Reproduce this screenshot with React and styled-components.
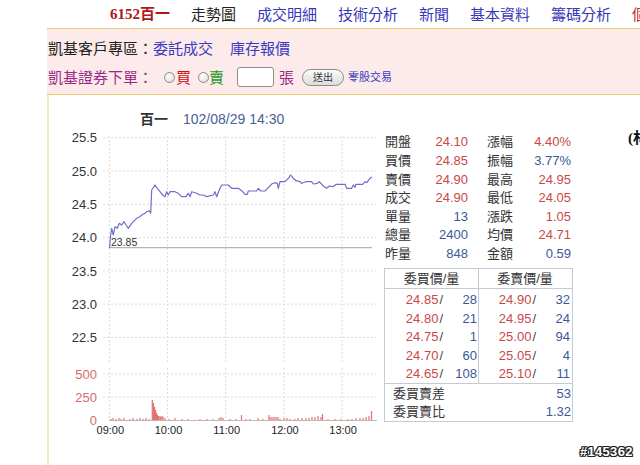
import React from 'react';
import styled, { createGlobalStyle } from 'styled-components';

const GlobalStyle = createGlobalStyle`
  html, body { margin: 0; padding: 0; background: #fff; }
  body {
    width: 640px; height: 465px; overflow: hidden;
    font-family: "Liberation Sans", "Noto Sans CJK TC", sans-serif;
    color: #333;
  }
`;

const RED = '#c94848';
const BLUE = '#3d5896';

const Page = styled.div`
  width: 640px; height: 465px; position: relative; overflow: hidden;
  display: flex; flex-direction: column;
`;

const Nav = styled.nav`
  height: 28px; flex: none; display: flex; align-items: center; gap: 21px;
  padding-left: 110px; white-space: nowrap; font-size: 15px; line-height: 1; overflow: hidden;
`;
const Brand = styled.span`
  flex: none; color: #b01818; font-weight: bold;
  font-family: "Liberation Serif", "Noto Sans CJK TC", serif;
`;
const NavItem = styled.span`
  flex: none;
  color: ${p => (p.$tone === 'black' ? '#222' : p.$tone === 'red' ? '#c0302a' : '#3737b8')};
`;

const ClientBox = styled.div`
  flex: none; margin-left: 47px; background: #fdeaea;
  border-top: 1px solid #e8cc72; border-bottom: 1px solid #e8cc72;
  padding: 9px 0 7px 1px; display: flex; flex-direction: column; gap: 9px;
`;
const BoxRow = styled.div`
  height: 20px; display: flex; align-items: center; font-size: 15px; white-space: nowrap; line-height: 1;
`;
const BoxLabel = styled.span`
  flex: none; color: ${p => (p.$order ? '#9a2a88' : '#222')};
`;
const BoxLink = styled.span`
  flex: none; color: #3a3ac0; margin-right: ${p => p.$mr || 0}px;
`;
const Radio = styled.span`
  flex: none; box-sizing: border-box; width: 11px; height: 11px; border-radius: 50%;
  border: 1px solid #8c8c8c; background: radial-gradient(circle at 40% 35%, #fff, #d8d8d8);
  margin-left: ${p => p.$ml}px; margin-right: ${p => p.$mr}px;
`;
const SideText = styled.span`
  flex: none; color: ${p => (p.$buy ? '#d01010' : '#1c9a1c')};
`;
const QtyInput = styled.input`
  flex: none; box-sizing: border-box; width: 37px; height: 20px; margin: 0 0 0 13px;
  border: 1px solid #8e8e8e; border-radius: 3px; padding: 0; background: #fff;
`;
const Unit = styled.span`
  flex: none; color: #9a2a88; margin-left: 5px;
`;
const SendButton = styled.button`
  flex: none; box-sizing: border-box; width: 42px; height: 17px; margin-left: 8px;
  border-radius: 9px; border: 1px solid #8a8a8a; background: linear-gradient(#fbfbfb, #dcdcdc);
  font-size: 10px; line-height: 15px; color: #333; padding: 0;
  font-family: "Liberation Sans", "Noto Sans CJK TC", sans-serif;
`;
const OddLot = styled.span`
  flex: none; margin-left: 4px; font-size: 11px; color: #3a3ac0;
`;

const Panel = styled.div`
  flex: 1; min-height: 0; margin-left: 47px; border-left: 2px solid #f4ebb3;
  display: flex; white-space: nowrap;
`;
const ChartSvg = styled.svg`
  flex: none; display: block;
`;
const Side = styled.div`
  flex: none; width: 190px; padding-top: 37.7px;
`;
const StatGrid = styled.div`
  display: grid; grid-template-columns: 36px 47px 55px 48px; grid-auto-rows: 18.6px;
  align-items: center; font-size: 13px; padding-left: 2px; line-height: 1;
`;
const StatLabel = styled.span`
  color: #333; padding-left: ${p => (p.$second ? 19 : 0)}px;
`;
const StatValue = styled.span`
  text-align: right; color: ${p => (p.$blue ? BLUE : RED)};
`;

const Book = styled.div`
  box-sizing: border-box; width: 189px; margin: 5.3px 0 0 1px;
  border: 1px solid #c6cad3; font-size: 13px; line-height: 1;
`;
const BookHead = styled.div`
  display: grid; grid-template-columns: 94px 92px; height: 19px; border-bottom: 1px solid #c6cad3;
`;
const HeadCell = styled.div`
  display: flex; align-items: center; justify-content: center; color: #333;
  border-right: ${p => (p.$divider ? '1px solid #c6cad3' : 'none')};
`;
const BookBody = styled.div`
  display: grid; grid-template-columns: 94px 92px; border-bottom: 1px solid #c6cad3;
`;
const BookCol = styled.div`
  padding: 1px 0 0; border-right: ${p => (p.$divider ? '1px solid #c6cad3' : 'none')};
`;
const BookRow = styled.div`
  display: grid; height: 18.6px; align-items: center;
  grid-template-columns: ${p => (p.$ask ? '57px 34px' : '58px 34px')};
  padding-right: ${p => (p.$ask ? 1 : 2)}px;
`;
const Price = styled.span`
  text-align: right; color: ${RED};
`;
const Slash = styled.span`
  color: #444; margin-left: 1px;
`;
const Vol = styled.span`
  text-align: right; color: ${BLUE};
`;
const FootRow = styled.div`
  height: 18.3px; display: flex; align-items: center; justify-content: space-between;
  padding: 0 1px 0 8px;
`;
const FootLabel = styled.span`
  color: #333;
`;
const FootValue = styled.span`
  color: ${BLUE};
`;

const SideNote = styled.div`
  flex: none; margin-left: 55px; padding-top: 35.5px; font-size: 15px; line-height: 1;
  font-weight: bold; color: #111; font-family: "Liberation Serif", "Noto Sans CJK TC", serif;
`;

const Watermark = styled.div`
  position: absolute; left: 580px; top: 444px; font-size: 13px; font-weight: bold; color: #fff;
  letter-spacing: 0.3px;
  text-shadow: -1px 0 #222, 1px 0 #222, 0 -1px #222, 0 1px #222, -1px -1px #222, 1px 1px #222, -1px 1px #222, 1px -1px #222;
`;

const priceY = v => 171 + (25 - v) * 66.6;
const priceTicks = [25.5, 25.0, 24.5, 24.0, 23.5, 23.0, 22.5];
const volTicks = [[500, 374], [250, 397], [0, 420]];
const hourX = i => 109.3 + i * 58.2;
const hours = ['09:00', '10:00', '11:00', '12:00', '13:00'];

const linePts = [
  [109.5, 248], [110.5, 236], [111.7, 228.3], [113.3, 235], [115, 226.7], [117.3, 228.3], [119.3, 223.3],
  [121.7, 225], [124, 221.7], [126, 225], [128.3, 228.3], [131.7, 223.3], [133.3, 221.7], [136.7, 218.3],
  [140, 216.7], [141.7, 215], [145, 213.3], [146.7, 211.7], [149.3, 210.7], [150.7, 213.3], [151.7, 190],
  [155, 185], [157.3, 188.3], [160, 191.7], [162.7, 195], [165, 196.7], [166.7, 191.7], [168.3, 195],
  [170, 191.7], [175, 191.7], [178.3, 193.3], [181.7, 196.7], [186, 196.7], [188.3, 193.3], [190, 196.7],
  [191.7, 191.7], [196.7, 193.3], [200, 195], [203.3, 195], [206.7, 196.7], [213.3, 195], [215, 191.7],
  [216.7, 196.7], [220, 188.3], [221.7, 185], [228.3, 185], [231.7, 188.3], [238.3, 188.3], [241.7, 190.7],
  [245, 194.3], [247.3, 194.3], [248.3, 191], [256.7, 191], [258.3, 188.3], [260.7, 191], [265, 191],
  [268.3, 187.7], [271.7, 184], [275, 182.7], [277.3, 183.3], [278.3, 188.3], [280, 181.7], [285, 181.7],
  [288.3, 178.3], [290.7, 175], [293.3, 178.3], [296, 180.7], [300, 181.7], [301.7, 183.3], [306, 181.7],
  [311.7, 181.7], [313.3, 184], [317.3, 183.3], [319.3, 181.7], [323.3, 186], [326.7, 188.3], [329.3, 186],
  [333.3, 186.7], [336, 184.3], [345, 184.3], [346.7, 188.3], [351.7, 188.3], [353.3, 185], [355, 187.3],
  [356, 184.3], [362.7, 184.3], [365, 181.7], [366.7, 182.7], [370, 178.3], [372, 177],
];
const linePath = linePts.map((p, i) => `${i ? 'L' : 'M'}${p[0]},${p[1]}`).join(' ');

const volBars = [
  [111, 1], [113, 2], [116, 1], [119, 2], [121, 1], [124, 2], [130, 1], [133, 2], [137, 1], [140, 2],
  [143, 1], [146, 2], [149, 1], [152.3, 20], [153.5, 17], [154.6, 13], [155.6, 10], [156.6, 7], [157.6, 5],
  [158.6, 4], [160, 4], [161, 3], [162, 4], [163, 3], [165, 2], [169, 1], [175, 2], [182, 1], [188, 1],
  [200, 1], [207, 1], [213, 1], [219, 2], [221, 3], [223, 2], [230, 1], [236, 1], [241.5, 5], [246, 1],
  [250, 1], [258, 2], [263, 1], [269, 5], [270, 3], [272, 3], [274, 3], [276, 3], [278, 3], [280, 1],
  [284, 2], [287, 2], [290, 1], [295, 1], [298, 2], [302, 2], [306, 2], [309, 2], [312, 3], [315, 3],
  [318, 4], [321, 3], [322.5, 6], [328, 1], [335, 1], [341, 1], [348, 1], [352, 1], [356, 2], [360, 2],
  [363, 2], [366, 3], [369, 4], [371.5, 9],
];

const stats = [
  ['開盤', '24.10', false, '漲幅', '4.40%', false],
  ['買價', '24.85', false, '振幅', '3.77%', true],
  ['賣價', '24.90', false, '最高', '24.95', false],
  ['成交', '24.90', false, '最低', '24.05', false],
  ['單量', '13', true, '漲跌', '1.05', false],
  ['總量', '2400', true, '均價', '24.71', false],
  ['昨量', '848', true, '金額', '0.59', true],
];
const bids = [['24.85', '28'], ['24.80', '21'], ['24.75', '1'], ['24.70', '60'], ['24.65', '108']];
const asks = [['24.90', '32'], ['24.95', '24'], ['25.00', '94'], ['25.05', '4'], ['25.10', '11']];

function Chart() {
  const font = '"Liberation Sans", "Noto Sans CJK TC", sans-serif';
  return (
    <ChartSvg width={334} height={370} viewBox="49 95 334 370">
      <g fontFamily={font}>
        <text x={140} y={124} fontSize={14} fill="#333" fontWeight="bold">百一</text>
        <text x={183} y={124} fontSize={14} fill="#4a6098">102/08/29 14:30</text>
        {priceTicks.map(v => (
          <g key={v}>
            <line x1={103} x2={376} y1={priceY(v)} y2={priceY(v)} stroke="#dcdcdc" strokeDasharray="2,2" />
            <text x={97} y={priceY(v) + 4.6} fontSize={13} fill="#333" textAnchor="end">{v.toFixed(1)}</text>
          </g>
        ))}
        {volTicks.map(([v, y]) => (
          <g key={v}>
            {v > 0 && <line x1={103} x2={376} y1={y} y2={y} stroke="#dcdcdc" strokeDasharray="2,2" />}
            <text x={97} y={y + 4.6} fontSize={13} fill="#d46c6c" textAnchor="end">{v}</text>
          </g>
        ))}
        {hours.map((h, i) => (
          <g key={h}>
            <line x1={hourX(i)} x2={hourX(i)} y1={136} y2={363} stroke="#dcdcdc" strokeDasharray="2,2" />
            <line x1={hourX(i)} x2={hourX(i)} y1={368} y2={420} stroke="#dcdcdc" strokeDasharray="2,2" />
            <text x={hourX(i) + 1} y={434} fontSize={11} fill="#222" textAnchor="middle">{h}</text>
          </g>
        ))}
        <line x1={109} x2={372} y1={247.7} y2={247.7} stroke="#a0a0b2" strokeWidth={1} />
        <text x={111} y={246} fontSize={10.5} fill="#333">23.85</text>
        <path d={linePath} fill="none" stroke="#6f6fc9" strokeWidth={1.2} strokeLinejoin="round" />
        {volBars.map(([x, h], i) => (
          <rect key={i} x={x - 0.6} y={420 - h} width={1.2} height={h} fill="#e27272" />
        ))}
        <line x1={109} x2={377} y1={420.5} y2={420.5} stroke="#c8b4b4" strokeWidth={1} />
      </g>
    </ChartSvg>
  );
}

export default function App() {
  return (
    <Page>
      <GlobalStyle />
      <Nav>
        <Brand>6152百一</Brand>
        <NavItem $tone="black">走勢圖</NavItem>
        <NavItem>成交明細</NavItem>
        <NavItem>技術分析</NavItem>
        <NavItem>新聞</NavItem>
        <NavItem>基本資料</NavItem>
        <NavItem>籌碼分析</NavItem>
        <NavItem $tone="red">個股健診</NavItem>
      </Nav>
      <ClientBox>
        <BoxRow>
          <BoxLabel>凱基客戶專區：</BoxLabel>
          <BoxLink $mr={17}>委託成交</BoxLink>
          <BoxLink>庫存報價</BoxLink>
        </BoxRow>
        <BoxRow>
          <BoxLabel $order>凱基證券下單：</BoxLabel>
          <Radio $ml={11} $mr={1} />
          <SideText $buy>買</SideText>
          <Radio $ml={7} $mr={0} />
          <SideText>賣</SideText>
          <QtyInput type="text" defaultValue="" />
          <Unit>張</Unit>
          <SendButton type="button">送出</SendButton>
          <OddLot>零股交易</OddLot>
        </BoxRow>
      </ClientBox>
      <Panel>
        <Chart />
        <Side>
          <StatGrid>
            {stats.map(([l1, v1, b1, l2, v2, b2]) => (
              <React.Fragment key={l1}>
                <StatLabel>{l1}</StatLabel>
                <StatValue $blue={b1}>{v1}</StatValue>
                <StatLabel $second>{l2}</StatLabel>
                <StatValue $blue={b2}>{v2}</StatValue>
              </React.Fragment>
            ))}
          </StatGrid>
          <Book>
            <BookHead>
              <HeadCell $divider>委買價/量</HeadCell>
              <HeadCell>委賣價/量</HeadCell>
            </BookHead>
            <BookBody>
              <BookCol $divider>
                {bids.map(([p, v]) => (
                  <BookRow key={p}>
                    <Price>{p}<Slash>/</Slash></Price>
                    <Vol>{v}</Vol>
                  </BookRow>
                ))}
              </BookCol>
              <BookCol>
                {asks.map(([p, v]) => (
                  <BookRow key={p} $ask>
                    <Price>{p}<Slash>/</Slash></Price>
                    <Vol>{v}</Vol>
                  </BookRow>
                ))}
              </BookCol>
            </BookBody>
            <FootRow>
              <FootLabel>委買賣差</FootLabel>
              <FootValue>53</FootValue>
            </FootRow>
            <FootRow>
              <FootLabel>委買賣比</FootLabel>
              <FootValue>1.32</FootValue>
            </FootRow>
          </Book>
        </Side>
        <SideNote>(林</SideNote>
      </Panel>
      <Watermark>#145362</Watermark>
    </Page>
  );
}
